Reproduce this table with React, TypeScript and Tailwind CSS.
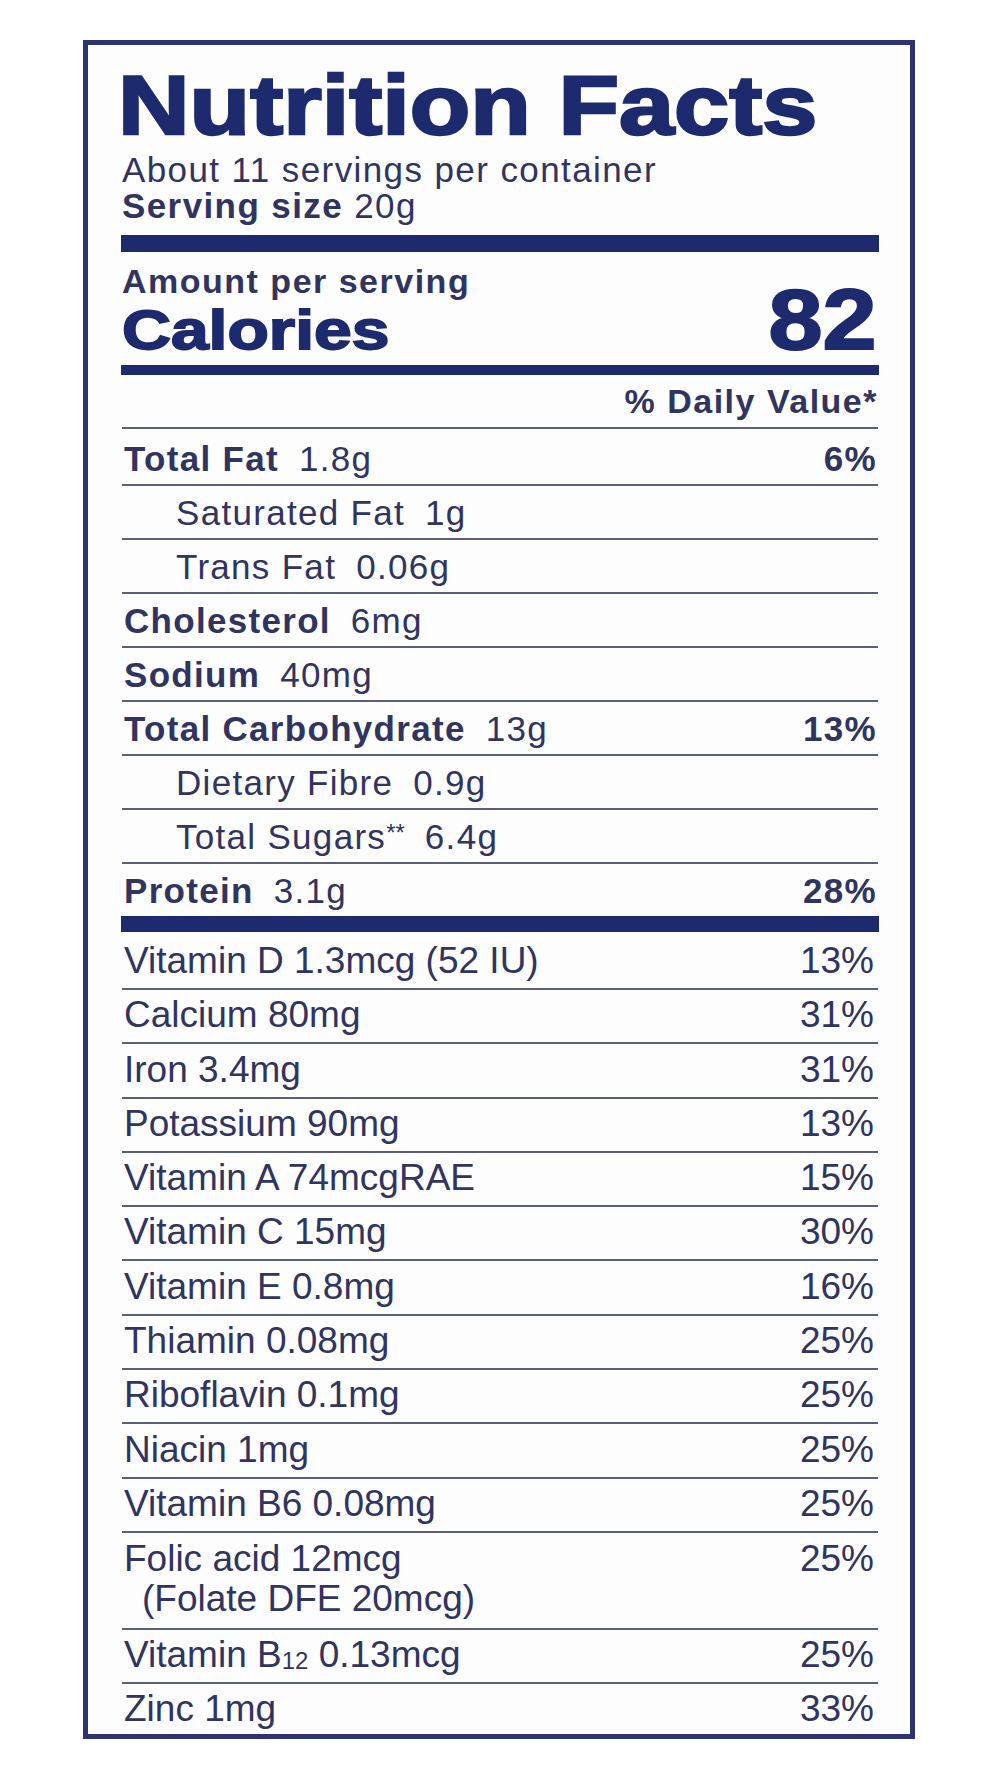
import React from 'react';

type TopRow = {
  label: string;
  value: string;
  dv?: string;
  bold?: boolean;
  indent?: boolean;
  tall?: boolean;
};

type VitRow = {
  label: React.ReactNode;
  dv: string;
  first?: boolean;
};

const topRows: TopRow[] = [
  { label: 'Total Fat', value: '1.8g', dv: '6%', bold: true, tall: true },
  { label: 'Saturated Fat', value: '1g', indent: true },
  { label: 'Trans Fat', value: '0.06g', indent: true },
  { label: 'Cholesterol', value: '6mg', bold: true },
  { label: 'Sodium', value: '40mg', bold: true },
  { label: 'Total Carbohydrate', value: '13g', dv: '13%', bold: true },
  { label: 'Dietary Fibre', value: '0.9g', indent: true },
  { label: 'Total Sugars', value: '6.4g', indent: true },
  { label: 'Protein', value: '3.1g', dv: '28%', bold: true },
];

const vitRows: VitRow[] = [
  { label: 'Vitamin D 1.3mcg (52 IU)', dv: '13%', first: true },
  { label: 'Calcium 80mg', dv: '31%' },
  { label: 'Iron 3.4mg', dv: '31%' },
  { label: 'Potassium 90mg', dv: '13%' },
  { label: 'Vitamin A 74mcgRAE', dv: '15%' },
  { label: 'Vitamin C 15mg', dv: '30%' },
  { label: 'Vitamin E 0.8mg', dv: '16%' },
  { label: 'Thiamin 0.08mg', dv: '25%' },
  { label: 'Riboflavin 0.1mg', dv: '25%' },
  { label: 'Niacin 1mg', dv: '25%' },
  { label: 'Vitamin B6 0.08mg', dv: '25%' },
];

const NutrientRow = ({ row }: { row: TopRow }) => (
  <div
    className={`flex items-end justify-between border-t-2 border-[#5b5e7a] pb-[8px] text-[35px] leading-[35px] tracking-[1.3px] ${
      row.tall ? 'h-[57px]' : 'h-[54px]'
    }`}
  >
    <div className={`whitespace-nowrap ${row.indent ? 'pl-[54px]' : 'pl-[2px]'}`}>
      <span className={row.bold ? 'font-bold' : ''}>{row.label}</span>
      {row.label === 'Total Sugars' && (
        <span className="text-[24px] leading-[0] align-[8px] tracking-normal">**</span>
      )}
      <span className="ml-[20px]">{row.value}</span>
    </div>
    {row.dv && <span className="font-bold pr-[1px]">{row.dv}</span>}
  </div>
);

const VitaminRow = ({ row }: { row: VitRow }) => (
  <div
    className={`flex items-end justify-between pb-[9px] text-[37px] leading-[37px] ${
      row.first ? 'h-[56px]' : 'h-[54.3px] border-t-2 border-[#5b5e7a]'
    }`}
  >
    <span className="pl-[2px] whitespace-nowrap">{row.label}</span>
    <span className="pr-[4px]">{row.dv}</span>
  </div>
);

export default function App() {
  return (
    <div className="min-h-screen bg-white pt-[40px] pl-[83px] font-['Liberation_Sans',Arial,sans-serif] text-[#30345f]">
      <div className="w-[832px] border-[5px] border-[#2c3370] bg-[#fdfdfe] pl-[34px] pr-[32px] pb-[2px]">
        {/* Header */}
        <div className="pt-[18px]">
          <h1 className="ml-[-4px] origin-left scale-x-[1.18] whitespace-nowrap text-[84px] font-bold leading-[84px] text-[#1d2a6e] [-webkit-text-stroke:2.5px_#1d2a6e]">
            Nutrition Facts
          </h1>
          <p className="mt-[5px] text-[35px] leading-[36px] tracking-[1.4px]">About 11 servings per container</p>
          <p className="text-[35px] leading-[36px] tracking-[1.4px]">
            <span className="font-bold">Serving size</span> 20g
          </p>
        </div>

        <div className="mt-[11px] -mx-[1px] h-[17px] bg-[#1e2a6e]" />

        {/* Calories */}
        <div className="flex items-end justify-between">
          <div>
            <p className="mt-[12px] text-[34px] font-bold leading-[34px] tracking-[1.5px]">Amount per serving</p>
            <p className="mt-[4px] origin-left scale-x-[1.21] whitespace-nowrap text-[56px] font-bold leading-[56px] text-[#1d2a6e] [-webkit-text-stroke:1.8px_#1d2a6e]">
              Calories
            </p>
          </div>
          <span className="origin-right scale-x-[1.13] pr-[1px] text-[86px] font-bold leading-[77px] text-[#1d2a6e] [-webkit-text-stroke:2px_#1d2a6e]">
            82
          </span>
        </div>

        <div className="mt-[7px] -mx-[1px] h-[10px] bg-[#1e2a6e]" />

        <div className="flex h-[52px] items-end justify-end pb-[8px] text-[34px] font-bold leading-[35px] tracking-[1.5px]">
          % Daily Value*
        </div>

        {topRows.map((row) => (
          <NutrientRow key={row.label} row={row} />
        ))}

        <div className="-mx-[1px] h-[16px] bg-[#1e2a6e]" />

        {/* Vitamins and minerals */}
        {vitRows.map((row) => (
          <VitaminRow key={String(row.label)} row={row} />
        ))}

        <div className="flex h-[97px] justify-between border-t-2 border-[#5b5e7a] pt-[6px] text-[37px] leading-[40px]">
          <div className="pl-[2px] whitespace-nowrap">
            <p>Folic acid 12mcg</p>
            <p className="pl-[18px]">(Folate DFE 20mcg)</p>
          </div>
          <span className="pr-[4px]">25%</span>
        </div>

        <div className="flex h-[54px] items-end justify-between border-t-2 border-[#5b5e7a] pb-[9px] text-[37px] leading-[37px]">
          <span className="pl-[2px] whitespace-nowrap">
            Vitamin B<span className="text-[24px] leading-[0] align-[-2px]">12</span> 0.13mcg
          </span>
          <span className="pr-[4px]">25%</span>
        </div>

        <div className="flex h-[50px] items-end justify-between border-t-2 border-[#5b5e7a] pb-[5px] text-[37px] leading-[37px]">
          <span className="pl-[2px]">Zinc 1mg</span>
          <span className="pr-[4px]">33%</span>
        </div>
      </div>
    </div>
  );
}
